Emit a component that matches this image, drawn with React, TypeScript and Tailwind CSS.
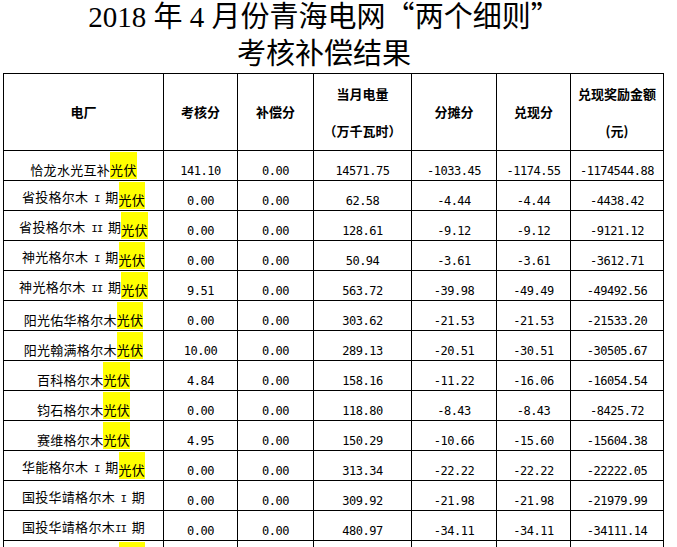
const cjk = "font-['Noto_Sans_CJK_SC',sans-serif]";
const num = "font-['DejaVu_Sans_Mono',monospace] text-[12px] tracking-[-0.5px]";

type Row = {
  name: string;
  roman?: string;
  tail?: string;
  pv: boolean;
  v: string[];
};

const rows: Row[] = [
  { name: "恰龙水光互补", pv: true, v: ["141.10", "0.00", "14571.75", "-1033.45", "-1174.55", "-1174544.88"] },
  { name: "省投格尔木", roman: " I ", tail: "期", pv: true, v: ["0.00", "0.00", "62.58", "-4.44", "-4.44", "-4438.42"] },
  { name: "省投格尔木", roman: " II ", tail: "期", pv: true, v: ["0.00", "0.00", "128.61", "-9.12", "-9.12", "-9121.12"] },
  { name: "神光格尔木", roman: " I ", tail: "期", pv: true, v: ["0.00", "0.00", "50.94", "-3.61", "-3.61", "-3612.71"] },
  { name: "神光格尔木", roman: " II ", tail: "期", pv: true, v: ["9.51", "0.00", "563.72", "-39.98", "-49.49", "-49492.56"] },
  { name: "阳光佑华格尔木", pv: true, v: ["0.00", "0.00", "303.62", "-21.53", "-21.53", "-21533.20"] },
  { name: "阳光翰满格尔木", pv: true, v: ["10.00", "0.00", "289.13", "-20.51", "-30.51", "-30505.67"] },
  { name: "百科格尔木", pv: true, v: ["4.84", "0.00", "158.16", "-11.22", "-16.06", "-16054.54"] },
  { name: "钧石格尔木", pv: true, v: ["0.00", "0.00", "118.80", "-8.43", "-8.43", "-8425.72"] },
  { name: "赛维格尔木", pv: true, v: ["4.95", "0.00", "150.29", "-10.66", "-15.60", "-15604.38"] },
  { name: "华能格尔木", roman: " I ", tail: "期", pv: true, v: ["0.00", "0.00", "313.34", "-22.22", "-22.22", "-22222.05"] },
  { name: "国投华靖格尔木", roman: " I ", tail: "期", pv: false, v: ["0.00", "0.00", "309.92", "-21.98", "-21.98", "-21979.99"] },
  { name: "国投华靖格尔木", roman: "II ", tail: "期", pv: false, v: ["0.00", "0.00", "480.97", "-34.11", "-34.11", "-34111.14"] },
  { name: "鲁能格尔木", roman: " I ", tail: "期", pv: true, v: ["0.00", "0.00", "95.40", "-6.77", "-6.77", "-6765.30"] },
];

const widths = [160, 74, 76, 98, 85, 74, 93];

function Name({ r }: { r: Row }) {
  return (
    <div className="flex justify-center items-end text-[13px] tracking-[0.3px] pb-[1px]">
      <span className="leading-[13px] pb-[3px] whitespace-pre">
        {r.name}
        {r.roman && (
          <span className="font-['Liberation_Mono',monospace] text-[11px] tracking-[-1px]">{r.roman}</span>
        )}
        {r.tail}
      </span>
      {r.pv && <span className="bg-[#ffff00] leading-[13px] pt-[11px] pb-[3px]">光伏</span>}
    </div>
  );
}

export default function App() {
  return (
    <div className={`bg-white text-black min-h-[547px] pl-[3px] ${cjk}`}>
      {/* Title */}
      <div className="flex flex-col h-[73px] w-[642px] pt-[3px] text-center text-[29px] leading-[23px] font-['Liberation_Serif','Noto_Sans_CJK_SC',serif]">
        <div>
          2018 年 4 月份青海电网<span className={cjk}>“</span>两个细则<span className={cjk}>”</span>
        </div>
        <div className="mt-[14px]">考核补偿结果</div>
      </div>

      <table className="border-collapse table-fixed w-[661px]">
        <colgroup>
          {widths.map((w, i) => (
            <col key={i} style={{ width: w }} />
          ))}
        </colgroup>
        <thead>
          <tr className="h-[77px] text-[13px] font-bold">
            <th className="border border-black font-bold">电厂</th>
            <th className="border border-black font-bold">考核分</th>
            <th className="border border-black font-bold">补偿分</th>
            <th className="border border-black font-bold leading-[37.5px]">
              当月电量
              <br />
              （万千瓦时）
            </th>
            <th className="border border-black font-bold">分摊分</th>
            <th className="border border-black font-bold">兑现分</th>
            <th className="border border-black font-bold leading-[37.5px]">
              兑现奖励金额
              <br />
              (元)
            </th>
          </tr>
        </thead>
        <tbody>
          {rows.map((r, i) => (
            <tr key={i} className="h-[30px]">
              <td className="border border-black align-bottom p-0">
                <Name r={r} />
              </td>
              {r.v.map((x, j) => (
                <td key={j} className={`border border-black text-center align-bottom p-0 pb-[2px] leading-[13px] ${num}`}>
                  {x}
                </td>
              ))}
            </tr>
          ))}
        </tbody>
      </table>
    </div>
  );
}
